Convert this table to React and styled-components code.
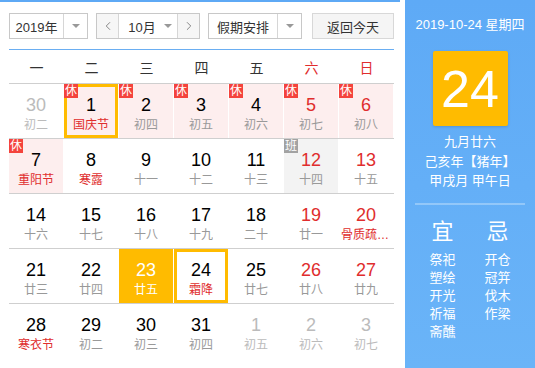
import styled, { createGlobalStyle } from "styled-components";
import { ChevronLeft, ChevronRight } from "lucide-react";

const GlobalStyle = createGlobalStyle`
  body {
    margin: 0;
    background: #fff;
    font-family: "Liberation Sans", "Noto Sans CJK SC", sans-serif;
  }
`;

const Page = styled.div`
  display: flex;
  width: 535px;
  height: 368px;
  overflow: hidden;
`;

const Main = styled.div`
  width: 400px;
  border-top: 2px solid #5ea9f5;
  padding: 11px 6px 0 9px;
  box-sizing: border-box;
`;

const Toolbar = styled.div`
  display: flex;
  height: 26px;
  gap: 8px;
`;

const Select = styled.div`
  display: flex;
  width: ${(p) => p.$w}px;
  border: 1px solid #c8c8c8;
  box-sizing: border-box;
  font-size: 13px;
  color: #333;
`;

const SelectText = styled.div`
  flex: 1;
  display: flex;
  align-items: center;
  justify-content: center;
  border-right: ${(p) => (p.$split ? "1px solid #d6d6d6" : "none")};
`;

const Caret = styled.div`
  width: 23px;
  display: flex;
  align-items: center;
  justify-content: center;
  &::after {
    content: "";
    border-left: 4px solid transparent;
    border-right: 4px solid transparent;
    border-top: 4px solid #999;
  }
`;

const MonthGroup = styled.div`
  display: flex;
  width: 104px;
  border: 1px solid #c8c8c8;
  box-sizing: border-box;
  font-size: 13px;
  color: #333;
`;

const Arrow = styled.div`
  width: 21px;
  background: #f6f6f6;
  color: #777;
  display: flex;
  align-items: center;
  justify-content: center;
  border-${(p) => (p.$side === "left" ? "right" : "left")}: 1px solid #d6d6d6;
`;

const MonthText = styled.div`
  flex: 1;
  display: flex;
  align-items: center;
  justify-content: center;
  gap: 8px;
  padding-left: 4px;
`;

const SmallCaret = styled.span`
  border-left: 4px solid transparent;
  border-right: 4px solid transparent;
  border-top: 4px solid #999;
`;

const TodayButton = styled.div`
  width: 82px;
  margin-left: 2px;
  border: 1px solid #d8d8d8;
  background: #f5f5f5;
  box-sizing: border-box;
  display: flex;
  align-items: center;
  justify-content: center;
  font-size: 13px;
  color: #333;
`;

const Rule = styled.div`
  height: 1px;
  background: #6aaef2;
  margin-top: 10px;
  width: 385px;
`;

const WeekHeader = styled.div`
  display: grid;
  grid-template-columns: repeat(7, 55px);
  height: 33px;
  align-items: center;
`;

const WeekName = styled.div`
  text-align: center;
  font-size: 14px;
  color: ${(p) => (p.$weekend ? "#e02d2d" : "#333")};
`;

const Week = styled.div`
  display: grid;
  grid-template-columns: repeat(7, 55px);
  width: 385px;
  border-top: 1px solid #cfcfcf;
  height: 55px;
  box-sizing: border-box;
`;

const Cell = styled.div`
  position: relative;
  margin-right: 1px;
  box-sizing: border-box;
  display: flex;
  flex-direction: column;
  align-items: center;
  padding-top: ${(p) => (p.$selected ? 8 : 11)}px;
  background: ${(p) =>
    p.$today ? "#ffbb00" : p.$rest ? "#fdeeee" : p.$work ? "#f3f3f3" : "transparent"};
  border: ${(p) => (p.$selected ? "3px solid #ffbb00" : "none")};
`;

const Day = styled.div`
  font-size: 18px;
  line-height: 20px;
  color: ${(p) => p.$color};
`;

const Lunar = styled.div`
  font-size: 12px;
  line-height: 18px;
  margin-top: 1px;
  color: ${(p) => p.$color};
  max-width: 50px;
  white-space: nowrap;
  overflow: hidden;
  text-overflow: ellipsis;
`;

const Badge = styled.span`
  position: absolute;
  top: ${(p) => (p.$inset ? -3 : 0)}px;
  left: ${(p) => (p.$inset ? -3 : 0)}px;
  width: 14px;
  height: 14px;
  font-size: 12px;
  line-height: 14px;
  text-align: center;
  color: #fff;
  background: ${(p) => (p.$work ? "#a2a2a2" : "#f4433c")};
`;

const Side = styled.div`
  margin-left: 5px;
  width: 130px;
  background: linear-gradient(#5eaaf6, #6ab4f8);
  color: #fff;
  display: flex;
  flex-direction: column;
  align-items: center;
  padding: 17px 10px 0;
  box-sizing: border-box;
`;

const DateLine = styled.div`
  font-size: 13px;
  line-height: 16px;
`;

const BigDay = styled.div`
  margin-top: 18px;
  width: 75px;
  height: 75px;
  background: #ffbb00;
  border-radius: 2px;
  box-shadow: 0 1px 3px rgba(0, 0, 0, 0.15);
  display: flex;
  align-items: center;
  justify-content: center;
  font-size: 52px;
`;

const LunarInfo = styled.div`
  margin-top: 6px;
  font-size: 13px;
  line-height: 19.5px;
  text-align: center;
`;

const SideRule = styled.div`
  align-self: stretch;
  height: 2px;
  background: rgba(255, 255, 255, 0.3);
  margin-top: 12px;
`;

const Advice = styled.div`
  align-self: stretch;
  display: grid;
  grid-template-columns: 1fr 1fr;
  margin-top: 14px;
`;

const AdviceCol = styled.div`
  display: flex;
  flex-direction: column;
  align-items: center;
  font-size: 13px;
  line-height: 18px;
`;

const AdviceTitle = styled.div`
  font-size: 22px;
  line-height: 26px;
  margin-bottom: 6px;
`;

const weekNames = ["一", "二", "三", "四", "五", "六", "日"];

const c = (d, l, o = {}) => ({ d, l, ...o });

const weeks = [
  [
    c(30, "初二", { other: true }),
    c(1, "国庆节", { rest: true, fest: true, selected: true }),
    c(2, "初四", { rest: true }),
    c(3, "初五", { rest: true }),
    c(4, "初六", { rest: true }),
    c(5, "初七", { rest: true }),
    c(6, "初八", { rest: true }),
  ],
  [
    c(7, "重阳节", { rest: true, fest: true }),
    c(8, "寒露", { fest: true }),
    c(9, "十一"),
    c(10, "十二"),
    c(11, "十三"),
    c(12, "十四", { work: true }),
    c(13, "十五"),
  ],
  [
    c(14, "十六"),
    c(15, "十七"),
    c(16, "十八"),
    c(17, "十九"),
    c(18, "二十"),
    c(19, "廿一"),
    c(20, "骨质疏松日", { fest: true }),
  ],
  [
    c(21, "廿三"),
    c(22, "廿四"),
    c(23, "廿五", { today: true }),
    c(24, "霜降", { fest: true, selected: true }),
    c(25, "廿七"),
    c(26, "廿八"),
    c(27, "廿九"),
  ],
  [
    c(28, "寒衣节", { fest: true }),
    c(29, "初二"),
    c(30, "初三"),
    c(31, "初四"),
    c(1, "初五", { other: true }),
    c(2, "初六", { other: true }),
    c(3, "初七", { other: true }),
  ],
];

const yi = ["祭祀", "塑绘", "开光", "祈福", "斋醮"];
const ji = ["开仓", "冠笄", "伐木", "作梁"];

const App = () => {
  return (
    <>
      <GlobalStyle />
      <Page>
        <Main>
          <Toolbar>
            <Select $w={79}>
              <SelectText $split>2019年</SelectText>
              <Caret />
            </Select>
            <MonthGroup>
              <Arrow $side="left">
                <ChevronLeft size={14} strokeWidth={1.5} />
              </Arrow>
              <MonthText>
                10月 <SmallCaret />
              </MonthText>
              <Arrow $side="right">
                <ChevronRight size={14} strokeWidth={1.5} />
              </Arrow>
            </MonthGroup>
            <Select $w={94}>
              <SelectText $split>假期安排</SelectText>
              <Caret />
            </Select>
            <TodayButton>返回今天</TodayButton>
          </Toolbar>
          <Rule />
          <WeekHeader>
            {weekNames.map((n, i) => (
              <WeekName key={n} $weekend={i >= 5}>
                {n}
              </WeekName>
            ))}
          </WeekHeader>
          {weeks.map((week, wi) => (
            <Week key={wi}>
              {week.map((cell, i) => {
                const weekend = i >= 5;
                let dayColor = "#000";
                let lunarColor = "#999";
                if (cell.other) {
                  dayColor = "#bbb";
                  lunarColor = "#bbb";
                } else if (cell.today) {
                  dayColor = "#fff";
                  lunarColor = "#fff";
                } else {
                  if (weekend) dayColor = "#e02d2d";
                  if (cell.fest) lunarColor = "#e02d2d";
                }
                return (
                  <Cell
                    key={i}
                    $rest={cell.rest}
                    $work={cell.work}
                    $today={cell.today}
                    $selected={cell.selected}
                  >
                    {cell.rest && <Badge $inset={cell.selected}>休</Badge>}
                    {cell.work && <Badge $work>班</Badge>}
                    <Day $color={dayColor}>{cell.d}</Day>
                    <Lunar $color={lunarColor}>{cell.l}</Lunar>
                  </Cell>
                );
              })}
            </Week>
          ))}
        </Main>
        <Side>
          <DateLine>2019-10-24 星期四</DateLine>
          <BigDay>24</BigDay>
          <LunarInfo>
            九月廿六
            <br />
            己亥年【猪年】
            <br />
            甲戌月 甲午日
          </LunarInfo>
          <SideRule />
          <Advice>
            <AdviceCol>
              <AdviceTitle>宜</AdviceTitle>
              {yi.map((t) => (
                <div key={t}>{t}</div>
              ))}
            </AdviceCol>
            <AdviceCol>
              <AdviceTitle>忌</AdviceTitle>
              {ji.map((t) => (
                <div key={t}>{t}</div>
              ))}
            </AdviceCol>
          </Advice>
        </Side>
      </Page>
    </>
  );
};

export default App;
